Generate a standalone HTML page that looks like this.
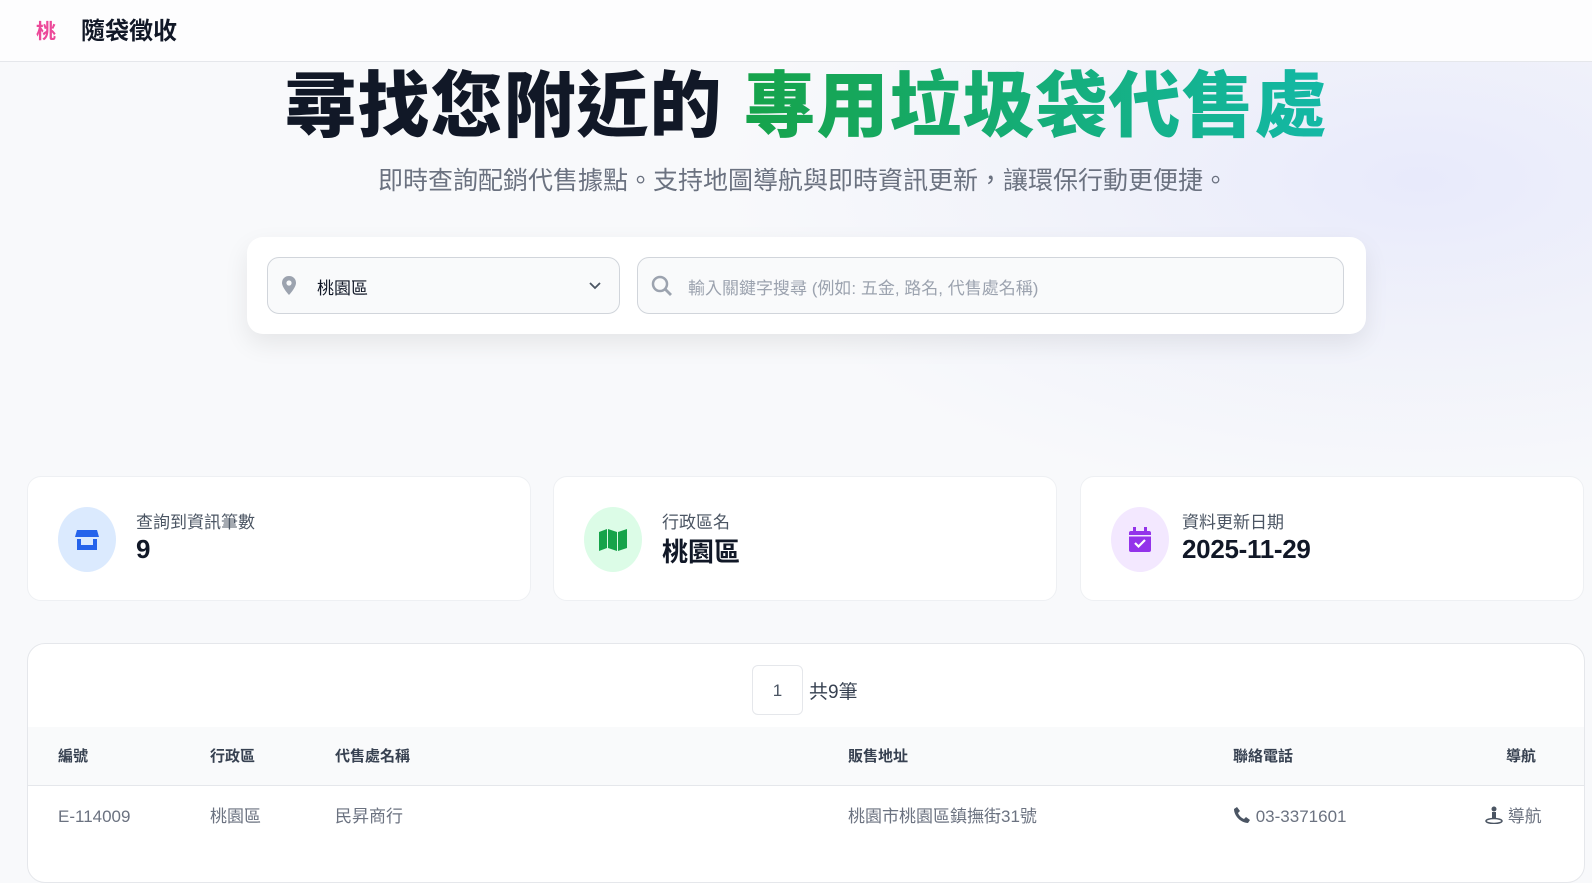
<!DOCTYPE html>
<html><head><meta charset="utf-8">
<style>
*{box-sizing:border-box;margin:0;padding:0}
body{width:1592px;height:848px;overflow:hidden;font-family:"Liberation Sans","Noto Sans CJK TC",sans-serif;background:#f8f9fb;position:relative;color:#111827}
.bg{position:absolute;left:0;top:60px;width:1592px;height:420px;background:radial-gradient(ellipse 700px 330px at 1420px 120px,#e8eafb 0%,rgba(236,238,250,0.6) 50%,rgba(248,249,251,0) 100%)}
.nav{position:absolute;left:0;top:0;width:1592px;height:62px;background:#fdfdfe;border-bottom:1px solid #e5e7eb}
.logo{position:absolute;left:36px;top:15px;font-size:20px;color:#ec4899;font-weight:bold}
.brand{position:absolute;left:81px;top:11px;font-size:24px;font-weight:bold;color:#111827}
h1{position:absolute;left:16px;width:1580px;top:62px;text-align:center;font-size:72px;font-weight:900;color:#111827;letter-spacing:1px;line-height:90px}
h1 span{background:linear-gradient(90deg,#16a34a,#14b8a6);-webkit-background-clip:text;color:transparent}
.sub{position:absolute;left:10px;width:1586px;top:161px;text-align:center;font-size:25px;color:#6b7280}
.search{position:absolute;left:247px;top:237px;width:1119px;height:97px;background:#fff;border-radius:16px;box-shadow:0 10px 25px rgba(0,0,0,0.08)}
.sel,.inp{position:absolute;top:20px;height:57px;border:1px solid #d1d5db;border-radius:12px;background:#f9fafb;font-size:17px}
.sel{left:20px;width:353px}
.inp{left:390px;width:707px;color:#9ca3af}
.card{position:absolute;top:476px;height:125px;width:504px;background:#fff;border-radius:14px;border:1px solid #eef0f3}
.ic{position:absolute;left:30px;top:30px;width:58px;height:65px;border-radius:50%;display:flex;align-items:center;justify-content:center}
.lab{position:absolute;left:108px;top:31px;font-size:17px;color:#4b5563}
.val{position:absolute;left:108px;top:57px;font-size:26px;font-weight:bold;color:#111827}
.tbl{position:absolute;left:27px;top:643px;width:1558px;height:240px;background:#fff;border-radius:18px;border:1px solid #e5e7eb;overflow:hidden}
.pg{position:absolute;left:724px;top:21px;width:51px;height:50px;border:1px solid #e5e7eb;border-radius:6px;text-align:center;line-height:50px;font-size:17px;color:#4b5563}
.pgt{position:absolute;left:781px;top:33px;font-size:19px;color:#374151}
.th{position:absolute;left:0;top:83px;width:100%;height:59px;background:#f9fafb;border-bottom:1px solid #e5e7eb}
.th div,.tr div{position:absolute;top:0;line-height:59px}
.th div{font-size:15px;font-weight:bold;color:#374151}
.tr{position:absolute;left:0;top:142px;width:100%;height:62px}
.tr div{font-size:17px;color:#6b7280;line-height:62px}
</style></head><body>
<div class="bg"></div>
<div class="nav"><div class="logo">桃</div><div class="brand">隨袋徵收</div></div>
<h1>尋找您附近的 <span>專用垃圾袋代售處</span></h1>
<div class="sub">即時查詢配銷代售據點。支持地圖導航與即時資訊更新，讓環保行動更便捷。</div>
<div class="search">
 <div class="sel">
  <svg style="position:absolute;left:12px;top:17px" width="18" height="22" viewBox="0 0 18 22"><path d="M9 1C4.6 1 2 4.2 2 8c0 4.5 7 12 7 12s7-7.5 7-12c0-3.8-2.6-7-7-7z" fill="#9ca3af"/><circle cx="9" cy="8" r="2.6" fill="#f9fafb"/></svg>
  <span style="position:absolute;left:49px;top:16px;color:#111827">桃園區</span>
  <svg style="position:absolute;left:320px;top:23px" width="14" height="10" viewBox="0 0 14 10"><path d="M2 2l5 5 5-5" stroke="#4b5563" stroke-width="1.8" fill="none"/></svg>
 </div>
 <div class="inp">
  <svg style="position:absolute;left:13px;top:17px" width="22" height="22" viewBox="0 0 22 22"><circle cx="9" cy="9" r="7" stroke="#9ca3af" stroke-width="2.5" fill="none"/><path d="M14 14l6 6" stroke="#9ca3af" stroke-width="2.8"/></svg>
  <span style="position:absolute;left:50px;top:16px">輸入關鍵字搜尋 (例如: 五金, 路名, 代售處名稱)</span>
 </div>
</div>
<div class="card" style="left:27px"><div class="ic" style="background:#dbeafe"><svg width="26" height="24" viewBox="0 0 26 24"><path d="M3 2h20l2 7H1z" fill="#2563eb"/><path d="M3 11h20v11H3z" fill="#2563eb"/><rect x="7" y="11" width="12" height="6" fill="#dbeafe"/></svg></div><div class="lab">查詢到資訊筆數</div><div class="val">9</div></div>
<div class="card" style="left:553px"><div class="ic" style="background:#dcfce7"><svg width="30" height="24" viewBox="0 0 30 24"><path d="M1 4l8-3v19l-8 3z M10 1l9 3v19l-9-3z M20 4l9-3v19l-9 3z" fill="#16a34a"/></svg></div><div class="lab">行政區名</div><div class="val" style="top:55px">桃園區</div></div>
<div class="card" style="left:1080px"><div class="ic" style="background:#f3e8ff"><svg width="24" height="26" viewBox="0 0 24 26"><rect x="1" y="4" width="22" height="21" rx="2" fill="#9333ea"/><rect x="5" y="0" width="3" height="6" fill="#9333ea"/><rect x="16" y="0" width="3" height="6" fill="#9333ea"/><rect x="1" y="8" width="22" height="1.5" fill="#f3e8ff"/><path d="M7 16l3.5 3.5L17 13" stroke="#fff" stroke-width="2.2" fill="none"/></svg></div><div class="lab" style="left:101px">資料更新日期</div><div class="val" style="left:101px;letter-spacing:-0.3px">2025-11-29</div></div>
<div class="tbl">
 <div class="pg">1</div><div class="pgt">共9筆</div>
 <div class="th"><div style="left:30px">編號</div><div style="left:182px">行政區</div><div style="left:307px">代售處名稱</div><div style="left:820px">販售地址</div><div style="left:1205px">聯絡電話</div><div style="left:1478px">導航</div></div>
 <div class="tr"><div style="left:30px">E-114009</div><div style="left:182px">桃園區</div><div style="left:307px">民昇商行</div><div style="left:820px">桃園市桃園區鎮撫街31號</div>
 <div style="left:1205px"><svg width="18" height="18" viewBox="0 0 18 18" style="vertical-align:-2px"><path d="M4 1l3 4-2 2c1 2.5 3.5 5 6 6l2-2 4 3-2 3C8 17 1 10 1 3z" fill="#4b5563"/></svg> 03-3371601</div>
 <div style="left:1457px"><svg width="18" height="18" viewBox="0 0 18 18" style="vertical-align:-2px"><circle cx="9" cy="3" r="2.5" fill="#4b5563"/><path d="M7 6h4v6H7z" fill="#4b5563"/><ellipse cx="9" cy="15" rx="8" ry="2.5" fill="none" stroke="#4b5563" stroke-width="1.5"/></svg> 導航</div></div>
</div>
</body></html>
